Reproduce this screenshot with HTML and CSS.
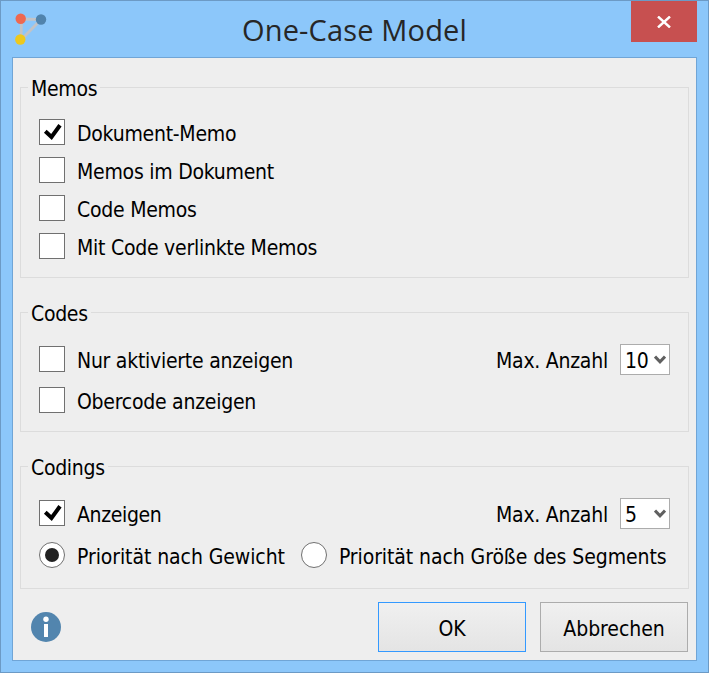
FILE: index.html
```html
<!DOCTYPE html>
<html lang="de">
<head>
<meta charset="utf-8">
<title>One-Case Model</title>
<link rel="stylesheet" href="styles.css">
</head>
<body>
<div class="window">
  <header class="titlebar">
    <svg class="logo" width="34" height="34" viewBox="0 0 34 34">
      <path d="M8.500 8 28 8.500 8 29Z" fill="none" stroke="#c3c3c6" stroke-width="2.800"/>
      <circle cx="7.700" cy="7.800" r="5.200" fill="#ee6850"/>
      <circle cx="28" cy="8.500" r="5.200" fill="#5083ac"/>
      <circle cx="7.300" cy="28.500" r="5.200" fill="#edc81d"/>
    </svg>
    <h1 class="title">One-Case Model</h1>
    <button class="close" aria-label="Schließen">
      <svg width="14" height="12" viewBox="0 0 14 12"><path d="M1 .5 13 11.500M13 .5 1 11.500" stroke="#fff" stroke-width="2.400"/></svg>
    </button>
  </header>
  <main class="client">
    <section class="group memos">
      <h2 class="legend">Memos</h2>
      <div class="row"><span class="box"><svg width="24" height="24" viewBox="0 0 24 24"><path d="M5.300 11.300 11.500 17 20 5.300" /></svg></span><span class="text">Dokument-Memo</span></div>
      <div class="row"><span class="box"></span><span class="text">Memos im Dokument</span></div>
      <div class="row"><span class="box"></span><span class="text">Code Memos</span></div>
      <div class="row"><span class="box"></span><span class="text">Mit Code verlinkte Memos</span></div>
    </section>
    <section class="group codes">
      <h2 class="legend">Codes</h2>
      <div class="row"><span class="box"></span><span class="text">Nur aktivierte anzeigen</span>
        <span class="text max">Max. Anzahl</span><span class="select"><span class="text num">10</span><svg width="12" height="10" viewBox="0 0 12 10"><path d="M1 1.500 6 6.800 11 1.500"/></svg></span></div>
      <div class="row"><span class="box"></span><span class="text">Obercode anzeigen</span></div>
    </section>
    <section class="group codings">
      <h2 class="legend">Codings</h2>
      <div class="row"><span class="box"><svg width="24" height="24" viewBox="0 0 24 24"><path d="M5.300 11.300 11.500 17 20 5.300" /></svg></span><span class="text show">Anzeigen</span>
        <span class="text max">Max. Anzahl</span><span class="select"><span class="text num">5</span><svg width="12" height="10" viewBox="0 0 12 10"><path d="M1 1.500 6 6.800 11 1.500"/></svg></span></div>
      <div class="row"><span class="radio on"></span><span class="text priority">Priorität nach Gewicht</span><span class="radio second"></span><span class="text priority">Priorität nach Größe des Segments</span></div>
    </section>
    <footer class="actions">
      <svg class="info" width="30" height="30" viewBox="0 0 30 30"><circle cx="15" cy="15" r="15" fill="#5285ae"/><circle cx="15" cy="7.200" r="2.700" fill="#fff"/><path d="M13 12h4v13h-4z" fill="#fff"/></svg>
      <button class="button primary">OK</button>
      <button class="button">Abbrechen</button>
    </footer>
  </main>
</div>
</body>
</html>
```
FILE: styles.css
```css
* { box-sizing: border-box; }
body {
  margin: 0;
  color: #000;
  font: 21px/26px "DejaVu Sans Condensed", "DejaVu Sans", sans-serif;
  font-stretch: condensed;
}
.window {
  width: 709px;
  height: 673px;
  padding: 0 11px 12px;
  border: 1px solid #6c9ac5;
  background: #8cc7fa;
}
.titlebar {
  display: grid;
  grid-template-columns: 66px 1fr 66px;
  height: 56px;
}
.logo { margin: 10px 0 0 1px; }
.title {
  margin: 7px 0 0;
  color: #262626;
  font: 400 29px/44px "Open Sans", "Noto Sans", sans-serif;
  letter-spacing: 0.15px;
  text-align: center;
  white-space: nowrap;
}
.close {
  display: grid;
  place-items: center;
  width: 66px;
  height: 41px;
  padding: 0;
  border: 0;
  background: #c75050;
}
.client {
  height: 604px;
  padding: 29px 7px 0;
  border: 1px solid #70a5d6;
  background: #eee;
}
.group {
  display: flex;
  flex-direction: column;
  width: 669px;
  padding: 0 18px;
  border: 1px solid #dcdcdc;
}
.memos { height: 191px; gap: 12px; }
.codes { height: 120px; margin-top: 34px; gap: 15px; }
.codings { height: 123px; margin-top: 34px; gap: 16px; }
.legend {
  align-self: flex-start;
  height: 26px;
  margin: -13px 0 6px -11px;
  padding: 0 3px;
  background: #eee;
  font-size: 21px;
  font-weight: 400;
  letter-spacing: -0.3px;
  line-height: 28px;
}
.codes .legend { margin-bottom: 5px; }
.codings .legend { margin-bottom: 4px; }
.row { display: flex; align-items: center; height: 26px; }
.text {
  margin-bottom: -4px;
  letter-spacing: -0.25px;
  white-space: nowrap;
}
.show { letter-spacing: -0.35px; }
.priority { letter-spacing: -0.08px; }
.box, .radio {
  flex: none;
  width: 26px;
  height: 26px;
  margin-right: 12px;
  border: 1px solid #707070;
  background: #fff;
}
.box svg { display: block; fill: none; stroke: #000; stroke-width: 4; }
.radio { display: grid; place-items: center; border-radius: 50%; }
.on::after { content: ""; width: 14px; height: 14px; border-radius: 50%; background: #222; }
.second { margin-left: 16px; }
.max { width: 112px; margin-left: auto; }
.select {
  display: flex;
  align-items: center;
  justify-content: space-between;
  width: 50px;
  height: 31px;
  margin-left: 12px;
  padding: 0 3px 0 4px;
  border: 1px solid #acacac;
  background: #fff;
}
.select svg { margin-top: 2px; fill: none; stroke: #606060; stroke-width: 3; }
.actions { display: flex; margin-top: 13px; }
.info { margin: 10px auto 0 11px; }
.button {
  width: 148px;
  height: 50px;
  margin-left: 14px;
  padding: 3px 0 0;
  border: 1px solid #acacac;
  background: linear-gradient(#f0f0f0, #e4e4e4);
  color: #000;
  font: inherit;
  letter-spacing: -0.05px;
}
.actions .button:last-child { margin-right: 1px; }
.primary { border-color: #3399ff; }
```
